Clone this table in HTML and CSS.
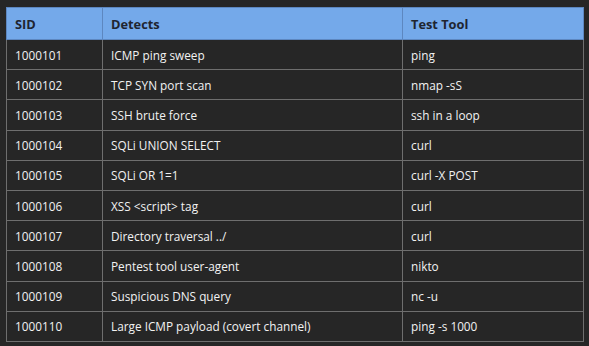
FILE: index.html
```html
<!DOCTYPE html>
<html>
<head>
<meta charset="utf-8">
<link rel="stylesheet" href="styles.css">
</head>
<body>
<table class="rules">
<colgroup><col class="c1"><col class="c2"><col class="c3"></colgroup>
<thead>
<tr><th>SID</th><th>Detects</th><th>Test Tool</th></tr>
</thead>
<tbody>
<tr><td>1000101</td><td>ICMP ping sweep</td><td>ping</td></tr>
<tr><td>1000102</td><td>TCP SYN port scan</td><td>nmap -sS</td></tr>
<tr><td>1000103</td><td>SSH brute force</td><td>ssh in a loop</td></tr>
<tr><td>1000104</td><td>SQLi UNION SELECT</td><td>curl</td></tr>
<tr><td>1000105</td><td>SQLi OR 1=1</td><td>curl -X POST</td></tr>
<tr><td>1000106</td><td>XSS &lt;script&gt; tag</td><td>curl</td></tr>
<tr><td>1000107</td><td>Directory traversal ../</td><td>curl</td></tr>
<tr><td>1000108</td><td>Pentest tool user-agent</td><td>nikto</td></tr>
<tr><td>1000109</td><td>Suspicious DNS query</td><td>nc -u</td></tr>
<tr><td>1000110</td><td>Large ICMP payload (covert channel)</td><td>ping -s 1000</td></tr>
</tbody>
</table>
</body>
</html>
```
FILE: styles.css
```css
html, body {
  margin: 0;
  padding: 0;
  background: #262626;
}
body {
  padding: 7px 6px;
  font-family: "Open Sans", "Noto Sans", sans-serif;
  font-size: 11.8px;
  color: #f2f2f2;
}
.rules {
  border-collapse: collapse;
  width: 577px;
  table-layout: fixed;
}
.c1 { width: 96px; }
.c2 { width: 300px; }
.c3 { width: 181px; }
.rules th, .rules td {
  border: 1px solid #6e6e6e;
  padding: 0 0 0 8px;
  text-align: left;
  white-space: nowrap;
}
.rules th {
  background: #74a9ea;
  color: #1f2530;
  font-weight: 700;
  font-size: 12.8px;
  height: 31px;
  border-color: #5d87c0;
}
.rules td {
  height: 29.2px;
}
```
